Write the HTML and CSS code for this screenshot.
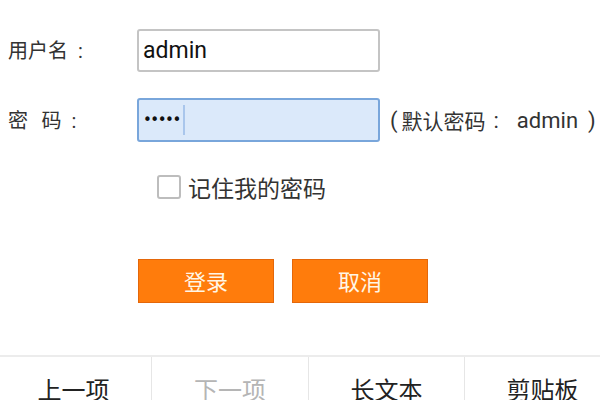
FILE: index.html
```html
<!DOCTYPE html>
<html lang="zh-CN">
<head>
<meta charset="utf-8">
<title>登录</title>
<link rel="stylesheet" href="styles.css">
</head>
<body>
<div class="form">
  <div class="row user">
    <span class="label">用户名<span class="colon">:</span></span>
    <div class="field">admin</div>
  </div>
  <div class="row pw">
    <span class="label">密&nbsp;&nbsp;&nbsp;码<span class="colon">:</span></span>
    <div class="field focus"><span class="dots">•••••</span><span class="caret"></span></div>
    <span class="hint"><span class="paren">(</span><span class="cjk">默认密码</span><span class="hcolon">:</span>admin<span class="paren close">)</span></span>
  </div>
  <div class="remember">
    <span class="box"></span>
    <span class="rtext">记住我的密码</span>
  </div>
  <div class="buttons">
    <button class="btn">登录</button>
    <button class="btn">取消</button>
  </div>
</div>
<nav class="bar">
  <div class="tab first">上一项</div>
  <div class="tab disabled">下一项</div>
  <div class="tab">长文本</div>
  <div class="tab">剪贴板</div>
</nav>
</body>
</html>
```
FILE: styles.css
```css
html, body {
  margin: 0;
  padding: 0;
  background: #fff;
  width: 600px;
  height: 400px;
  overflow: hidden;
  font-family: Roboto, "Noto Sans CJK SC", sans-serif;
  color: #333;
}
.form {
  padding-left: 8px;
  padding-top: 28px;
}
.row {
  display: flex;
  align-items: center;
  height: 44px;
}
.pw {
  margin-top: 26px;
}
.label {
  width: 129px;
  font-size: 20px;
  line-height: 24px;
  color: #333;
  white-space: pre;
  font-family: "Noto Sans CJK SC", sans-serif;
}
.colon {
  margin-left: 10px;
  font-family: Roboto, sans-serif;
}
.field {
  box-sizing: border-box;
  width: 243px;
  height: 44px;
  border: 2px solid #c4c4c4;
  border-radius: 3px;
  padding-left: 4px;
  display: flex;
  align-items: center;
  font-size: 23px;
  color: #111;
}
.user .field {
  height: 43px;
}
.field.focus {
  background: #dbe9fa;
  border-color: #79a6db;
}
.dots {
  font-family: "DejaVu Sans", sans-serif;
  font-size: 15px;
  letter-spacing: -1.5px;
  color: #111;
}
.caret {
  display: inline-block;
  width: 2px;
  height: 30px;
  margin-left: 3px;
  background: #a9c6ec;
}
.hint {
  margin-left: 10px;
  font-size: 22px;
  color: #333;
  white-space: nowrap;
  display: flex;
  align-items: center;
}
.paren {
  margin-right: 4px;
}
.paren.close {
  margin-right: 0;
  margin-left: 10px;
}
.cjk {
  font-family: "Noto Sans CJK SC", sans-serif;
  font-size: 21px;
}
.hcolon {
  margin: 0 18px 0 8px;
}
.remember {
  display: flex;
  align-items: center;
  margin-top: 33px;
  padding-left: 149px;
  height: 24px;
}
.box {
  box-sizing: border-box;
  width: 24px;
  height: 24px;
  border: 2px solid #bdbdbd;
  border-radius: 3px;
  background: #fff;
}
.rtext {
  margin-left: 7px;
  font-size: 23px;
  color: #333;
  font-family: "Noto Sans CJK SC", sans-serif;
}
.buttons {
  display: flex;
  gap: 18px;
  margin-top: 60px;
  padding-left: 130px;
}
.btn {
  box-sizing: border-box;
  width: 136px;
  height: 44px;
  background: #ff7c0c;
  border: 1px solid #e4670a;
  border-radius: 0;
  color: #fff6e6;
  font-family: "Noto Sans CJK SC", sans-serif;
  font-size: 22px;
  line-height: 40px;
  padding: 0 0 3px;
}
.bar {
  margin-top: 52px;
  border-top: 2px solid #ececec;
  display: grid;
  grid-template-columns: 151px 157px 156px 156px;
  height: 60px;
}
.tab {
  border-left: 1px solid #e6e6e6;
  text-align: center;
  padding-top: 14px;
  font-size: 24px;
  color: #222;
  font-family: "Noto Sans CJK SC", sans-serif;
}
.tab.first {
  border-left: none;
  padding-right: 4px;
}
.tab.disabled {
  color: #b5b5b5;
}
```
